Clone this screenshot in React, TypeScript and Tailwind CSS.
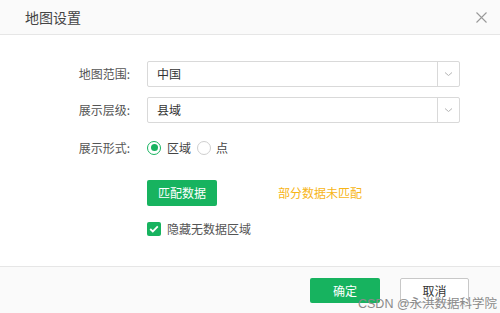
import React from "react";

const font = { fontFamily: '"Noto Sans CJK SC", "Noto Sans", sans-serif' };

function Chevron() {
  return (
    <svg width="9" height="6" viewBox="0 0 9 6" fill="none">
      <path d="M1 1.5 L4.5 4.5 L8 1.5" stroke="#b5b5b5" strokeWidth="1" />
    </svg>
  );
}

function Select({ value }: { value: string }) {
  return (
    <div className="flex h-[26px] w-[313px] items-center rounded-[2px] border border-[#d9d9d9] bg-white">
      <div className="flex-1 pl-[9px] text-[12px] text-[#333]">{value}</div>
      <div className="flex h-full w-[22px] items-center justify-center border-l border-[#d9d9d9]">
        <Chevron />
      </div>
    </div>
  );
}

function Row({ label, children }: { label: string; children: React.ReactNode }) {
  return (
    <div className="flex items-center">
      <div className="w-[130px] text-right text-[12px] text-[#555]">{label}</div>
      <div className="ml-[17px] flex items-center">{children}</div>
    </div>
  );
}

export default function App() {
  return (
    <div className="relative flex h-[313px] w-[500px] flex-col bg-white" style={font}>
      <div className="flex h-[35px] shrink-0 items-center justify-between border-b border-[#e6e6e6] bg-[#fafafa] pl-[25px] pr-[13px]">
        <span className="text-[14px] text-[#444]">地图设置</span>
        <svg width="11" height="11" viewBox="0 0 11 11">
          <path d="M0.5 0.5 L10.5 10.5 M10.5 0.5 L0.5 10.5" stroke="#999" strokeWidth="1.1" />
        </svg>
      </div>
      <div className="flex flex-1 flex-col pt-[26px]">
        <Row label="地图范围:">
          <Select value="中国" />
        </Row>
        <div className="mt-[10px]">
          <Row label="展示层级:">
            <Select value="县域" />
          </Row>
        </div>
        <div className="mt-[11px] flex h-[27px] items-center">
          <Row label="展示形式:">
            <div className="flex items-center">
              <span className="flex h-[14px] w-[14px] items-center justify-center rounded-full border border-[#17b35f] bg-white">
                <span className="h-[7px] w-[7px] rounded-full bg-[#17b35f]" />
              </span>
              <span className="ml-[6px] text-[12px] text-[#444]">区域</span>
              <span className="ml-[6px] h-[14px] w-[14px] rounded-full border border-[#cfcfcf] bg-white" />
              <span className="ml-[5px] text-[12px] text-[#444]">点</span>
            </div>
          </Row>
        </div>
        <div className="ml-[147px] mt-[19px] flex items-center">
          <div className="flex h-[26px] w-[70px] items-center justify-center rounded-[2px] bg-[#17b35f] text-[12px] text-white">
            匹配数据
          </div>
          <span className="ml-[61px] text-[12px] text-[#f7b518]">部分数据未匹配</span>
        </div>
        <div className="ml-[147px] mt-[14px] flex items-center">
          <span className="flex h-[14px] w-[14px] items-center justify-center rounded-[2px] bg-[#17b35f]">
            <svg width="10" height="8" viewBox="0 0 10 8" fill="none">
              <path d="M1.2 4 L3.8 6.4 L8.8 1.4" stroke="white" strokeWidth="1.8" />
            </svg>
          </span>
          <span className="ml-[6px] text-[12px] text-[#555]">隐藏无数据区域</span>
        </div>
      </div>
      <div className="flex h-[47px] shrink-0 items-start border-t border-[#e6e6e6] bg-[#fafafa] pt-[11px]">
        <div className="ml-[310px] flex h-[25px] w-[70px] items-center justify-center rounded-[2px] bg-[#17b35f] text-[12px] text-white">
          确定
        </div>
        <div className="ml-[20px] flex h-[25px] w-[69px] items-center justify-center rounded-[2px] border border-[#c8c8c8] bg-white text-[12px] text-[#333]">
          取消
        </div>
      </div>
      <div className="absolute left-[358px] top-[295px] text-[12.5px] text-[#8a8a8a]" style={{ fontFamily: '"Liberation Sans", "Noto Sans CJK SC", sans-serif' }}>
        CSDN @永洪数据科学院
      </div>
    </div>
  );
}
